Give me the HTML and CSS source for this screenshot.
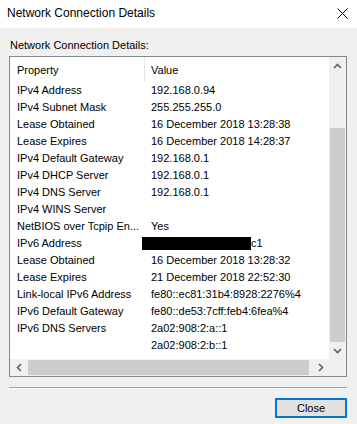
FILE: index.html
```html
<!DOCTYPE html>
<html lang="en">
<head>
    <meta charset="UTF-8">
    <meta name="viewport" content="width=device-width, initial-scale=1.0">
    <title>Network Connection Details</title>
    <link rel="stylesheet" href="styles.css">
</head>
<body>
    <div class="dialog">
        <div class="titlebar">
            <div class="title">Network Connection Details</div>
            <svg class="close-x" width="11" height="11" viewBox="0 0 11 11">
                <path d="M0.5 0.5 L10.5 10.5 M10.5 0.5 L0.5 10.5" stroke="#000" stroke-width="1" fill="none"/>
            </svg>
        </div>
        <div class="content">
            <div class="label">Network Connection Details:</div>
            <div class="listbox">
                <div class="list">
                    <div class="header">
                        <div class="col prop">Property</div>
                        <div class="col val">Value</div>
                    </div>
                    <div class="row"><div class="col prop">IPv4 Address</div><div class="col val">192.168.0.94</div></div>
                    <div class="row"><div class="col prop">IPv4 Subnet Mask</div><div class="col val">255.255.255.0</div></div>
                    <div class="row"><div class="col prop">Lease Obtained</div><div class="col val">16 December 2018 13:28:38</div></div>
                    <div class="row"><div class="col prop">Lease Expires</div><div class="col val">16 December 2018 14:28:37</div></div>
                    <div class="row"><div class="col prop">IPv4 Default Gateway</div><div class="col val">192.168.0.1</div></div>
                    <div class="row"><div class="col prop">IPv4 DHCP Server</div><div class="col val">192.168.0.1</div></div>
                    <div class="row"><div class="col prop">IPv4 DNS Server</div><div class="col val">192.168.0.1</div></div>
                    <div class="row"><div class="col prop">IPv4 WINS Server</div><div class="col val"></div></div>
                    <div class="row"><div class="col prop">NetBIOS over Tcpip En...</div><div class="col val">Yes</div></div>
                    <div class="row"><div class="col prop">IPv6 Address</div><div class="col val"><span class="redacted"></span>c1</div></div>
                    <div class="row"><div class="col prop">Lease Obtained</div><div class="col val">16 December 2018 13:28:32</div></div>
                    <div class="row"><div class="col prop">Lease Expires</div><div class="col val">21 December 2018 22:52:30</div></div>
                    <div class="row"><div class="col prop">Link-local IPv6 Address</div><div class="col val">fe80::ec81:31b4:8928:2276%4</div></div>
                    <div class="row"><div class="col prop">IPv6 Default Gateway</div><div class="col val">fe80::de53:7cff:feb4:6fea%4</div></div>
                    <div class="row"><div class="col prop">IPv6 DNS Servers</div><div class="col val">2a02:908:2:a::1</div></div>
                    <div class="row"><div class="col prop"></div><div class="col val">2a02:908:2:b::1</div></div>
                </div>
                <div class="vscroll">
                    <div class="arrow">
                        <svg width="9" height="6" viewBox="0 0 9 6"><path d="M1 5 L4.5 1.5 L8 5" stroke="#606060" stroke-width="1.6" fill="none"/></svg>
                    </div>
                    <div class="vtrack"><div class="vthumb"></div></div>
                    <div class="arrow">
                        <svg width="9" height="6" viewBox="0 0 9 6"><path d="M1 1 L4.5 4.5 L8 1" stroke="#606060" stroke-width="1.6" fill="none"/></svg>
                    </div>
                </div>
                <div class="hscroll">
                    <div class="arrow">
                        <svg width="6" height="9" viewBox="0 0 6 9"><path d="M5 1 L1.5 4.5 L5 8" stroke="#606060" stroke-width="1.6" fill="none"/></svg>
                    </div>
                    <div class="htrack"><div class="hthumb"></div></div>
                    <div class="arrow">
                        <svg width="6" height="9" viewBox="0 0 6 9"><path d="M1 1 L4.5 4.5 L1 8" stroke="#606060" stroke-width="1.6" fill="none"/></svg>
                    </div>
                </div>
                <div class="corner"></div>
            </div>
            <div class="separator"></div>
            <div class="buttons">
                <button class="btn">Close</button>
            </div>
        </div>
    </div>
</body>
</html>
```

FILE: styles.css
```css
/* Windows style dialog */
body {
    margin: 0;
    background: #f0f0f0;
    font-family: "Liberation Sans", Arial, sans-serif;
    font-size: 11px;
    color: #000;
}

.dialog {
    width: 357px;
    height: 424px;
    overflow: hidden;
}

.titlebar {
    height: 28px;
    background: #fff;
    display: flex;
    align-items: center;
    justify-content: space-between;
    padding: 0 9px 2px 7px;
    box-sizing: border-box;
}

.title {
    font-size: 12px;
}

.content {
    padding: 0 10px 0 9px;
}

.label {
    line-height: 13px;
    margin-top: 11px;
    padding-left: 1px;
}

.listbox {
    margin-top: 4px;
    border: 1px solid #828790;
    height: 319px;
    display: grid;
    grid-template-columns: 319px 17px;
    grid-template-rows: 302px 17px;
}

.list {
    background: #fff;
    overflow: hidden;
}

.header {
    display: flex;
    height: 25px;
    align-items: center;
}

.header .prop {
    border-right: 1px solid #e5e5e5;
    height: 25px;
    line-height: 26px;
    box-sizing: border-box;
}

.row {
    display: flex;
    height: 17px;
    line-height: 17px;
    white-space: nowrap;
}

.col.prop {
    width: 135px;
    padding-left: 7px;
    box-sizing: border-box;
    flex-shrink: 0;
}

.col.val {
    padding-left: 6px;
    display: flex;
    align-items: center;
}

.redacted {
    display: inline-block;
    width: 109px;
    height: 13px;
    background: #000;
    margin-left: -9px;
}

.vscroll {
    background: #f0f0f0;
    display: flex;
    flex-direction: column;
}

.vscroll .arrow {
    height: 17px;
    display: flex;
    align-items: center;
    justify-content: center;
}

.vtrack {
    flex: 1;
    padding: 54px 1px 0 1px;
}

.vthumb {
    height: 214px;
    background: #cdcdcd;
}

.hscroll {
    background: #f0f0f0;
    display: flex;
}

.hscroll .arrow {
    width: 17px;
    display: flex;
    align-items: center;
    justify-content: center;
}

.htrack {
    flex: 1;
    padding: 1px 3px 1px 1px;
}

.hthumb {
    height: 100%;
    background: #cdcdcd;
}

.corner {
    background: #f0f0f0;
}

.separator {
    margin-top: 10px;
    border-top: 1px solid #a0a0a0;
    border-bottom: 1px solid #fff;
}

.buttons {
    display: flex;
    justify-content: flex-end;
    margin-top: 9px;
}

.btn {
    width: 72px;
    height: 20px;
    background: #e1e1e1;
    border: 1px solid #0078d7;
    box-shadow: inset 0 0 0 1px #0078d7;
    font-family: "Liberation Sans", Arial, sans-serif;
    font-size: 11px;
    color: #000;
    padding: 0;
}
```
